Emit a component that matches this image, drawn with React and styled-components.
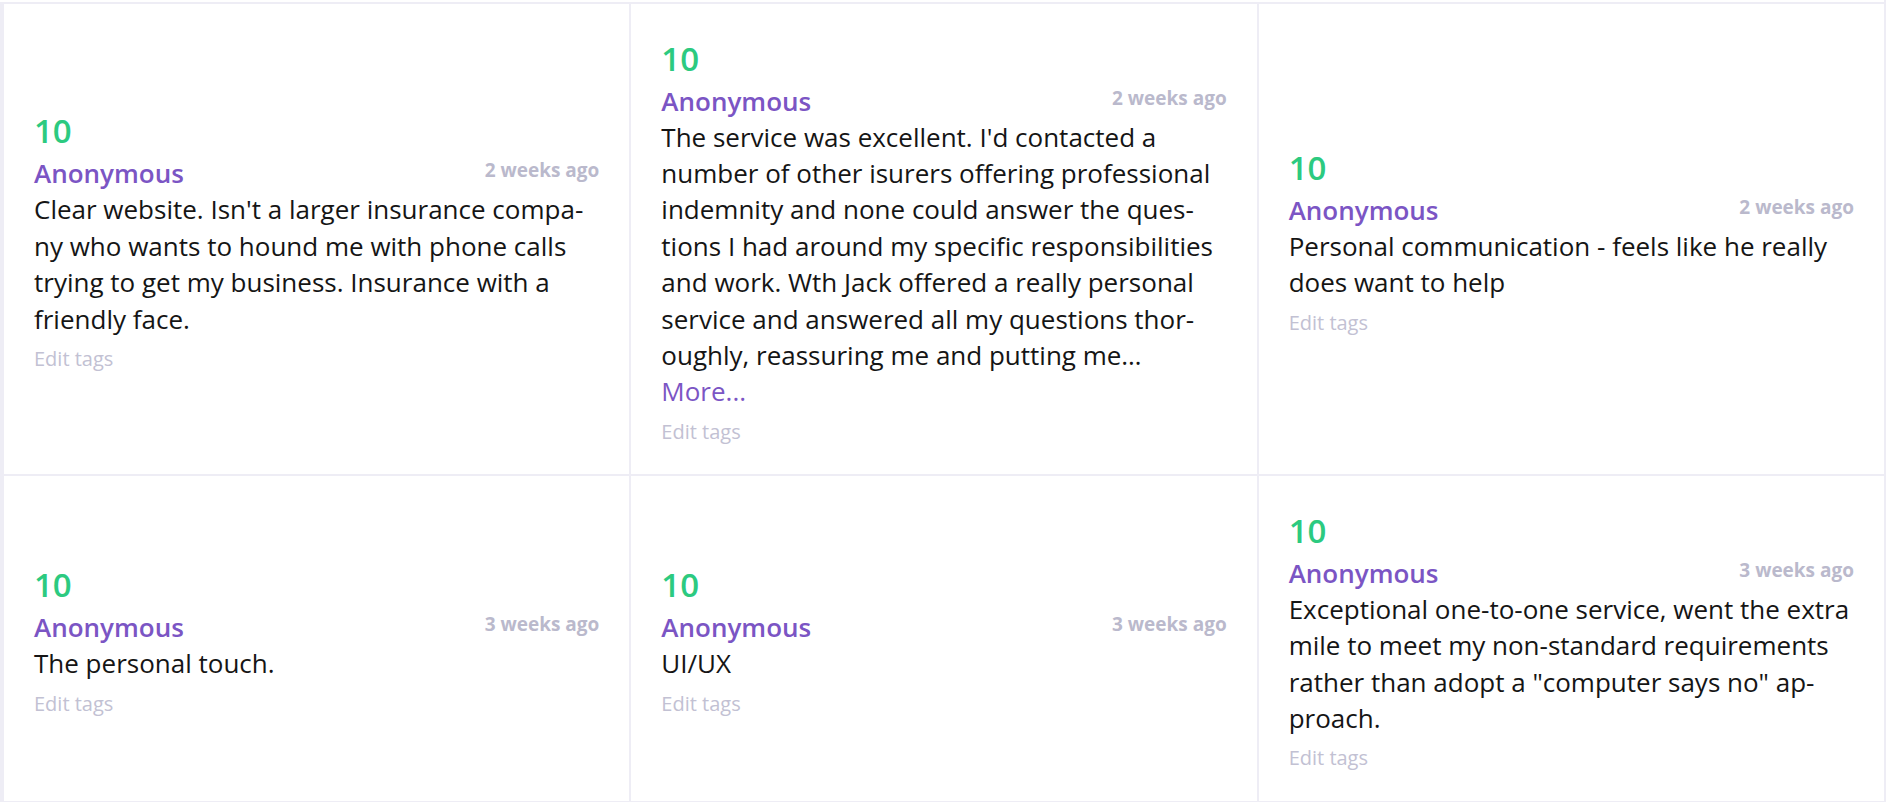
import styled, { createGlobalStyle } from "styled-components"

const GlobalStyle = createGlobalStyle`
  html, body {
    margin: 0;
    padding: 0;
    background: #fff;
  }
  body {
    font-family: "Open Sans", "Liberation Sans", sans-serif;
    color: #151515;
  }
`

const reviews = [
  {
    score: 10,
    when: "2 weeks ago",
    text: "Clear website. Isn't a larger insurance compa\u00ADny who wants to hound me with phone calls trying to get my business. Insurance with a friendly face.",
  },
  {
    score: 10,
    when: "2 weeks ago",
    text: "The service was excellent. I'd contacted a number of other isurers offering professional indemnity and none could answer the ques\u00ADtions I had around my specific responsibilities and work. Wth Jack offered a really personal service and answered all my questions thor\u00ADoughly, reassuring me and putting me\u2026",
    more: true,
  },
  {
    score: 10,
    when: "2 weeks ago",
    text: "Personal communication - feels like he really does want to help",
  },
  {
    score: 10,
    when: "3 weeks ago",
    text: "The personal touch.",
  },
  {
    score: 10,
    when: "3 weeks ago",
    text: "UI/UX",
  },
  {
    score: 10,
    when: "3 weeks ago",
    text: "Exceptional one-to-one service, went the extra mile to meet my non-standard requirements rather than adopt a \"computer says no\" ap\u00ADproach.",
  },
]

function App() {
  return (
    <>
      <GlobalStyle />
      <Page>
        <Grid>
          {reviews.map((r, i) => (
            <Card key={i}>
              <Score>{r.score}</Score>
              <Header>
                <Author>Anonymous</Author>
                <When>{r.when}</When>
              </Header>
              <Body>{r.text}</Body>
              {r.more && <More href="#">More...</More>}
              <EditTags href="#">Edit tags</EditTags>
            </Card>
          ))}
        </Grid>
      </Page>
    </>
  )
}

const Page = styled.div`
  background: #eeedf5;
  padding: 0 2px 2px 4px;
`

// white strip on top is the bottom edge of the row above
const Grid = styled.div`
  display: grid;
  grid-template-columns: repeat(3, 1fr);
  gap: 2px;
  border-top: 2px solid #fff;
  padding-top: 2px;
  margin-left: -4px;
  padding-left: 4px;
  background: #eeedf5;
`

const Card = styled.div`
  background: #fff;
  padding: 29.5px 30px;
  display: flex;
  flex-direction: column;
  justify-content: center;
  min-width: 0;
`

const Score = styled.div`
  font-size: 33px;
  font-weight: 600;
  line-height: 49px;
  color: #2cca80;
`

const Header = styled.div`
  display: flex;
  justify-content: space-between;
  align-items: flex-start;
`

const Author = styled.div`
  font-size: 26px;
  font-weight: 600;
  line-height: 36px;
  color: #7b55c4;
`

const When = styled.div`
  padding-top: 2px;
  font-size: 19px;
  font-weight: 700;
  line-height: 26px;
  color: #bab9cc;
`

const Body = styled.p`
  margin: 0;
  font-size: 26px;
  line-height: 36.4px;
  color: #151515;
`

const More = styled.a`
  font-size: 26px;
  line-height: 36.4px;
  color: #7b55c4;
  text-decoration: none;
  align-self: flex-start;
`

const EditTags = styled.a`
  margin-top: 8px;
  font-size: 20px;
  line-height: 27px;
  color: #c2c1d3;
  text-decoration: none;
  align-self: flex-start;
`

export default App
